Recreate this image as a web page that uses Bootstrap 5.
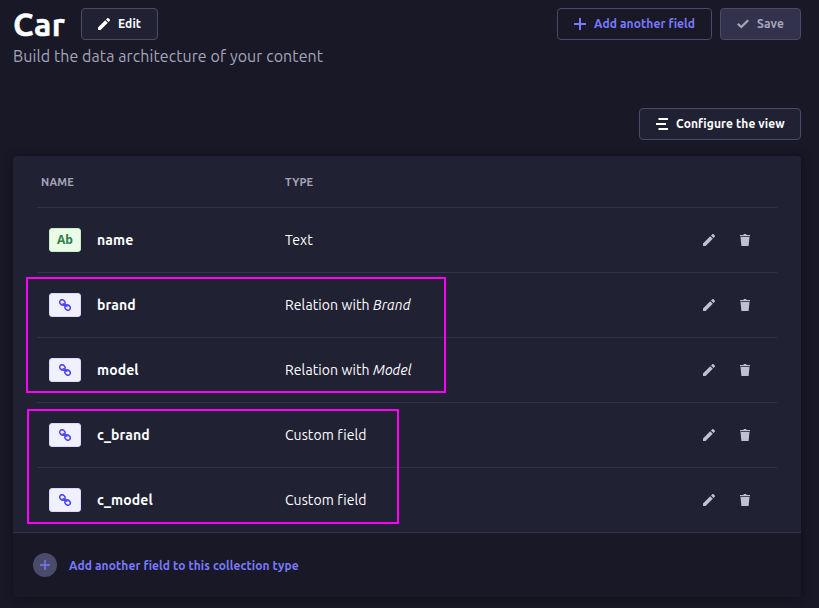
<!DOCTYPE html>
<html lang="en" data-bs-theme="dark">
<head>
<meta charset="utf-8">
<meta name="viewport" content="width=device-width, initial-scale=1">
<title>Car - Content-Type Builder</title>
<link href="https://cdn.jsdelivr.net/npm/bootstrap@5.3.0/dist/css/bootstrap.min.css" rel="stylesheet">
<style>
  body { background: #181826; color: #fff; font-family: Ubuntu, "Noto Sans", sans-serif; font-size: 14px; line-height: 20px; letter-spacing: .1px; height: 608px; overflow: hidden; }
  svg { display: block; fill: currentColor; flex: none; }
  .page { padding: 8px 18px 0 13px; }
  .title { font-size: 32px; line-height: 32px; font-weight: 700; width: 52px; letter-spacing: .4px; -webkit-text-stroke: .4px #fff; white-space: nowrap; margin-bottom: 0; }
  .subtitle { font-size: 16px; line-height: 24px; color: #a5a5ba; letter-spacing: .08px; margin-top: 4px; }
  .action { --bs-btn-padding-x: 16px; --bs-btn-padding-y: 0; height: 32px; border-radius: 4px; border: 1px solid #4a4a6a; background: #212134; color: #fff; font-size: 12px; line-height: 16px; font-weight: 700; letter-spacing: .1px; white-space: nowrap; gap: 8px; }
  .action-edit { width: 77px; }
  .action-add { width: 155px; background: #181826; color: #7b79ff; }
  .action-save { width: 81px; background: #32324d; color: #a5a5ba; }
  .action-view { width: 162px; }
  .toolbar-row { margin-top: 40px; }
  .panel { margin-top: 16px; height: 441px; border-radius: 4px; background: #212134; box-shadow: 1px 1px 10px rgba(3,3,5,.35); overflow: hidden; }
  .panel-body { padding: 0 24px; height: 376px; }
  .fields { table-layout: fixed; border-collapse: separate; border-spacing: 0; }
  .fields th, .fields td { padding: 0; vertical-align: middle; border-bottom: 1px solid #32324d; }
  .fields th { height: 52px; font-size: 11px; color: #a5a5ba; padding-left: 4px; letter-spacing: .2px; }
  .fields td { height: 65px; }
  .fields tbody tr:last-child td { border-bottom: 0; height: 64px; }
  .fields th:nth-child(2), .fields td:nth-child(2) { padding-left: 4px; }
  .col-name { width: 244px; }
  .col-tools { width: 100px; }
  .field-name { font-weight: 700; padding-left: 12px; gap: 16px; }
  .kind { width: 32px; height: 24px; border-radius: 3px; border: 1px solid #d9d8ff; background: #f0f0ff; color: #4945ff; }
  .kind-text { border-color: #c6f0c2; background: #eafbe7; color: #328048; font-family: "Open Sans", "Noto Sans", sans-serif; font-size: 12px; letter-spacing: 0; }
  .tools { color: #c0c0cf; padding-left: 26px; gap: 24px; }
  .panel-foot { height: 65px; background: #181826; border-top: 1px solid #32324d; padding-left: 20px; gap: 12px; color: #7b79ff; font-size: 12px; font-weight: 700; }
  .foot-label { padding-top: 2px; }
  .plus-dot { width: 24px; height: 24px; background: #4a4a6a; }
  .callout { border: 2px solid #f0f; pointer-events: none; }
  .callout-relations { left: 26px; top: 277px; width: 420px; height: 116px; }
  .callout-custom { left: 27px; top: 409px; width: 372px; height: 115px; }
</style>
</head>
<body class="position-relative">
<svg class="d-none">
  <symbol id="pencil" viewBox="0 0 12 12"><path d="M0 12V9.400L7.200 2.200l2.600 2.600L2.600 12zM8 1.500 9.100.4c.5-.5 1.100-.5 1.600 0l.9.9c.5.5.5 1.100 0 1.600L10.500 4z"/></symbol>
  <symbol id="trash" viewBox="0 0 12 12"><path d="M1 1h3.300L5 0h2l.7 1H11v1.200H1zM1.500 3.100h9L9.600 12H2.400z"/></symbol>
  <symbol id="plus" viewBox="0 0 12 12"><path d="M5 0h2v5h5v2H7v5H5V7H0V5h5z"/></symbol>
  <symbol id="link" viewBox="0 0 12 12"><g fill="none" stroke="currentColor" stroke-width="1.500"><ellipse cx="3.400" cy="3.400" rx="2.400" ry="2.800" transform="rotate(-45 3.400 3.400)"/><ellipse cx="8.600" cy="8.600" rx="2.400" ry="2.800" transform="rotate(-45 8.600 8.600)"/><path d="M3.900 4.200C4.300 5.700 5 6.500 6.400 6.400M5.600 5.600c1.400-.1 2.100.7 2.500 2.200"/></g></symbol>
</svg>
<main class="page">
  <header>
    <div class="d-flex align-items-center">
      <h1 class="title">Car</h1>
      <button class="btn action action-edit d-flex align-items-center ms-3"><svg width="12" height="12"><use href="#pencil"/></svg><span>Edit</span></button>
      <div class="d-flex gap-2 ms-auto">
        <button class="btn action action-add d-flex align-items-center"><svg width="12" height="12"><use href="#plus"/></svg><span>Add another field</span></button>
        <button class="btn action action-save d-flex align-items-center"><svg width="12" height="12" viewBox="0 0 12 12"><path d="M0 6.500 1.600 5l2.700 2.600L10.400 1.500 12 3 4.300 10.600z"/></svg><span>Save</span></button>
      </div>
    </div>
    <p class="subtitle mb-0">Build the data architecture of your content</p>
  </header>
  <div class="toolbar-row d-flex justify-content-end">
    <button class="btn action action-view d-flex align-items-center"><svg width="12" height="12" viewBox="0 0 12 12"><path d="M2.500 0H12v2H2.500zM0 5h10v2H0zM2.500 10H12v2H2.500z"/></svg><span>Configure the view</span></button>
  </div>
  <section class="panel">
    <div class="panel-body">
      <table class="fields w-100">
        <colgroup><col class="col-name"><col><col class="col-tools"></colgroup>
        <thead><tr><th>NAME</th><th>TYPE</th><th></th></tr></thead>
        <tbody>
          <tr><td><div class="field-name d-flex align-items-center"><span class="kind kind-text d-flex align-items-center justify-content-center">Ab</span><span>name</span></div></td><td>Text</td><td><div class="tools d-flex"><svg width="12" height="12"><use href="#pencil"/></svg><svg width="12" height="12"><use href="#trash"/></svg></div></td></tr>
          <tr><td><div class="field-name d-flex align-items-center"><span class="kind d-flex align-items-center justify-content-center"><svg width="12" height="12"><use href="#link"/></svg></span><span>brand</span></div></td><td>Relation with <em>Brand</em></td><td><div class="tools d-flex"><svg width="12" height="12"><use href="#pencil"/></svg><svg width="12" height="12"><use href="#trash"/></svg></div></td></tr>
          <tr><td><div class="field-name d-flex align-items-center"><span class="kind d-flex align-items-center justify-content-center"><svg width="12" height="12"><use href="#link"/></svg></span><span>model</span></div></td><td>Relation with <em>Model</em></td><td><div class="tools d-flex"><svg width="12" height="12"><use href="#pencil"/></svg><svg width="12" height="12"><use href="#trash"/></svg></div></td></tr>
          <tr><td><div class="field-name d-flex align-items-center"><span class="kind d-flex align-items-center justify-content-center"><svg width="12" height="12"><use href="#link"/></svg></span><span>c_brand</span></div></td><td>Custom field</td><td><div class="tools d-flex"><svg width="12" height="12"><use href="#pencil"/></svg><svg width="12" height="12"><use href="#trash"/></svg></div></td></tr>
          <tr><td><div class="field-name d-flex align-items-center"><span class="kind d-flex align-items-center justify-content-center"><svg width="12" height="12"><use href="#link"/></svg></span><span>c_model</span></div></td><td>Custom field</td><td><div class="tools d-flex"><svg width="12" height="12"><use href="#pencil"/></svg><svg width="12" height="12"><use href="#trash"/></svg></div></td></tr>
        </tbody>
      </table>
    </div>
    <div class="panel-foot d-flex align-items-center"><span class="plus-dot rounded-circle d-flex align-items-center justify-content-center"><svg width="10" height="10" viewBox="0 0 10 10"><path d="M4.300 0h1.400v4.300H10v1.400H5.700V10H4.300V5.700H0V4.300h4.300z"/></svg></span><span class="foot-label">Add another field to this collection type</span></div>
  </section>
</main>
<div class="callout callout-relations position-absolute"></div>
<div class="callout callout-custom position-absolute"></div>
<script src="https://cdn.jsdelivr.net/npm/bootstrap@5.3.0/dist/js/bootstrap.bundle.min.js"></script>
</body>
</html>
